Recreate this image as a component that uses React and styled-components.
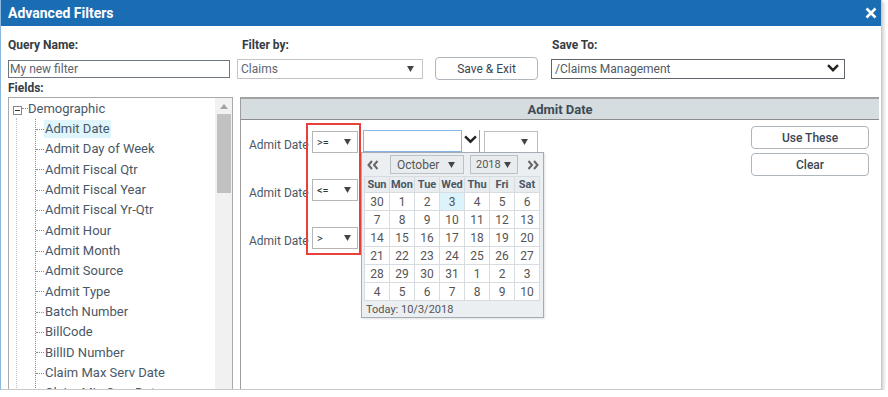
import React from 'react';
import styled, { createGlobalStyle } from 'styled-components';

const Global = createGlobalStyle`
  html, body { margin: 0; padding: 0; background: #fff; }
  body { font-family: Roboto, "Liberation Sans", Arial, sans-serif; }
  * { box-sizing: border-box; }
`;

const Window = styled.div`
  width: 882px;
  height: 390px;
  overflow: hidden;
  background: #fff;
  border-left: 1px solid #8db8df;
  border-right: 1px solid #c9c9c9;
  border-bottom: 1px solid #c9c9c9;
  box-shadow: 2px 2px 3px rgba(0, 0, 0, 0.18);
  display: flex;
  flex-direction: column;
`;

const TitleBar = styled.div`
  height: 26px;
  flex: none;
  background: #1b6db3;
  color: #fff;
  display: flex;
  align-items: center;
  justify-content: space-between;
  padding: 0 4px 0 7px;
  font-size: 14px;
  font-weight: 700;
`;

const CloseIcon = styled.svg`
  width: 12px;
  height: 12px;
`;

const FormRow = styled.div`
  display: flex;
  padding: 12px 0 0 7px;
`;

const Field = styled.div`
  display: flex;
  flex-direction: column;
  width: ${(p) => p.$w}px;
  margin-left: ${(p) => p.$ml || 0}px;
`;

const Label = styled.div`
  font-size: 12px;
  font-weight: 700;
  line-height: 14px;
  color: #363c42;
  padding-left: ${(p) => p.$pl || 0}px;
`;

const ControlRow = styled.div`
  display: flex;
  align-items: center;
  gap: 12px;
  height: 23px;
  margin-top: 5px;
`;

const TextInput = styled.div`
  width: 100%;
  height: 18px;
  border: 1px solid #6e7780;
  font-size: 12px;
  line-height: 16px;
  padding-left: 1px;
  color: #5a6570;
`;

const SelectBox = styled.div`
  width: ${(p) => p.$w}px;
  height: ${(p) => p.$h || 20}px;
  border: 1px solid ${(p) => p.$border || '#c4c4c4'};
  display: flex;
  align-items: center;
  justify-content: space-between;
  padding: 0 ${(p) => p.$pr || 6}px 0 ${(p) => p.$pl || 3}px;
  font-size: ${(p) => p.$fs || 12}px;
  color: ${(p) => p.$color || '#5d6770'};
  background: #fff;
  flex: none;
`;

const Caret = ({ size = 7 }) => (
  <svg width={size} height={size - 1} viewBox="0 0 8 7">
    <polygon points="0,0 8,0 4,7" fill="#444" />
  </svg>
);

const Chevron = ({ w = 12, sw = 2.2 }) => (
  <svg width={w} height={w * 0.7} viewBox="0 0 12 8">
    <polyline points="1,1 6,6 11,1" fill="none" stroke="#222" strokeWidth={sw} />
  </svg>
);

const Button = styled.div`
  width: ${(p) => p.$w}px;
  height: 23px;
  border: 1px solid #aeb5bb;
  border-radius: 4px;
  background: #fff;
  display: flex;
  align-items: center;
  justify-content: center;
  font-size: 12px;
  font-weight: ${(p) => p.$weight || 400};
  color: #3b4650;
  flex: none;
`;

const FieldsLabel = styled(Label)`
  padding-left: 7px;
  margin-top: 1px;
  margin-bottom: 2px;
`;

const Lower = styled.div`
  flex: 1;
  min-height: 0;
  display: flex;
  padding-left: 7px;
`;

const TreeBox = styled.div`
  width: 225px;
  flex: none;
  border: 1px solid #a9a9a9;
  border-bottom: none;
  display: flex;
`;

const TreeContent = styled.div`
  flex: 1;
  overflow: hidden;
  color: #4a5866;
  font-size: 13px;
`;

const Scrollbar = styled.div`
  width: 17px;
  background: #f1f1f1;
  display: flex;
  flex-direction: column;
  align-items: center;
`;

const ScrollArrow = styled.div`
  height: 16px;
  display: flex;
  align-items: center;
  justify-content: center;
`;

const ScrollThumb = styled.div`
  width: 14px;
  height: 79px;
  background: #c1c1c1;
`;

const RootRow = styled.div`
  height: 20px;
  display: flex;
  align-items: center;
  padding-left: 4px;
`;

const Toggle = styled.div`
  width: 9px;
  height: 9px;
  border: 1px solid #8a8a8a;
  position: relative;
  margin-top: 4px;
  &::after {
    content: '';
    position: absolute;
    left: 1px;
    right: 1px;
    top: 3px;
    height: 1px;
    background: #333;
  }
`;

const HLine = styled.span`
  width: ${(p) => p.$w}px;
  border-top: 1px dotted #8a8a8a;
  flex: none;
`;

const ChildList = styled.div`
  margin-left: 7px;
  padding-top: 1px;
  border-left: 1px dotted #c2c2c2;
`;

const ChildInner = styled.div`
  margin-left: 18px;
  border-left: 1px dotted #8a8a8a;
`;

const ChildItem = styled.div`
  height: 20.33px;
  display: flex;
  align-items: center;
  white-space: nowrap;
`;

const ItemText = styled.span`
  line-height: 18px;
  padding: 0 1px;
  background: ${(p) => (p.$selected ? '#dff5fc' : 'transparent')};
`;

const Panel = styled.div`
  flex: 1;
  margin-left: 7px;
  margin-right: 2px;
  border-left: 1px solid #9d9d9d;
  border-top: 2px solid #a2a2a2;
  display: flex;
  flex-direction: column;
`;

const PanelHeader = styled.div`
  height: 21px;
  flex: none;
  background: #d5dde1;
  border-bottom: 1px solid #8c8c8c;
  display: flex;
  align-items: center;
  justify-content: center;
  font-size: 13px;
  font-weight: 700;
  color: #3d4b56;
`;

const PanelBody = styled.div`
  flex: 1;
  display: flex;
`;

const Conditions = styled.div`
  display: flex;
  padding-top: 3px;
`;

const LabelColumn = styled.div`
  width: 57px;
  margin-left: 8px;
  padding-top: 8px;
  display: flex;
  flex-direction: column;
  gap: 26px;
`;

const CondLabel = styled.div`
  height: 22px;
  line-height: 29px;
  font-size: 12px;
  color: #4a5866;
  white-space: nowrap;
`;

const Highlight = styled.div`
  align-self: flex-start;
  border: 2px solid #e8413c;
  padding: 6px 1px 4px 4px;
  display: flex;
  flex-direction: column;
  gap: 26px;
`;

const ValueColumn = styled.div`
  position: relative;
  margin-left: 2px;
  padding-top: 7px;
`;

const ValueRow = styled.div`
  display: flex;
  align-items: flex-start;
  gap: 4px;
`;

const DateCombo = styled.div`
  display: flex;
  height: 22px;
`;

const DateInput = styled.div`
  width: 99px;
  height: 22px;
  border: 1px solid #86b6e6;
  background: #fff;
`;

const DropBtn = styled.div`
  width: 18px;
  height: 22px;
  display: flex;
  align-items: center;
  justify-content: center;
  border-right: 1px solid #9a9a9a;
  padding-bottom: 3px;
`;

const Calendar = styled.div`
  position: absolute;
  left: -2px;
  top: 29px;
  width: 183px;
  height: 166px;
  background: #eceff1;
  border: 1px solid #a4adb5;
  box-shadow: 1px 1px 2px rgba(0, 0, 0, 0.12);
  display: flex;
  flex-direction: column;
`;

const CalNav = styled.div`
  height: 23px;
  display: flex;
  align-items: center;
  padding-left: 5px;
`;

const NavArrow = styled.svg`
  width: 12px;
  height: 10px;
  flex: none;
  margin-left: ${(p) => p.$ml || 0}px;
`;

const NavSelect = styled(SelectBox)`
  margin-left: ${(p) => p.$ml || 0}px;
  background: #e9ecef;
  border-color: #b9c0c6;
  color: #555;
`;

const CalTable = styled.table`
  margin: 0 2px;
  width: 176px;
  border-collapse: collapse;
  table-layout: fixed;
  font-size: 12px;
  color: #555;
`;

const HeadCell = styled.th`
  height: 16px;
  padding: 0;
  border: 1px solid #d6dce0;
  background: #e9edf0;
  font-size: 11px;
  font-weight: 700;
  color: #4a5866;
  text-align: center;
  white-space: nowrap;
  overflow: hidden;
`;

const DayCell = styled.td`
  height: 18px;
  padding: 0;
  border: 1px solid #d6dce0;
  background: ${(p) => (p.$today ? '#dcf3fb' : '#fff')};
  text-align: center;
`;

const CalFooter = styled.div`
  height: 16px;
  line-height: 17px;
  font-size: 11px;
  color: #555;
  padding-left: 4px;
`;

const ButtonColumn = styled.div`
  margin-left: auto;
  margin-right: 10px;
  padding-top: 6px;
  display: flex;
  flex-direction: column;
  gap: 4px;
`;

const fields = [
  'Admit Date',
  'Admit Day of Week',
  'Admit Fiscal Qtr',
  'Admit Fiscal Year',
  'Admit Fiscal Yr-Qtr',
  'Admit Hour',
  'Admit Month',
  'Admit Source',
  'Admit Type',
  'Batch Number',
  'BillCode',
  'BillID Number',
  'Claim Max Serv Date',
  'Claim Min Serv Date',
];

const weeks = [
  [30, 1, 2, 3, 4, 5, 6],
  [7, 8, 9, 10, 11, 12, 13],
  [14, 15, 16, 17, 18, 19, 20],
  [21, 22, 23, 24, 25, 26, 27],
  [28, 29, 30, 31, 1, 2, 3],
  [4, 5, 6, 7, 8, 9, 10],
];

const ops = ['>=', '<=', '>'];

export default function App() {
  return (
    <>
      <Global />
      <Window>
        <TitleBar>
          <span>Advanced Filters</span>
          <CloseIcon viewBox="0 0 12 12">
            <path d="M1.5 1.5 L10.5 10.5 M10.5 1.5 L1.5 10.5" stroke="#fff" strokeWidth="2.6" />
          </CloseIcon>
        </TitleBar>

        <FormRow>
          <Field $w={222}>
            <Label>Query Name:</Label>
            <ControlRow>
              <TextInput>My new filter</TextInput>
            </ControlRow>
          </Field>
          <Field $w={301} $ml={7}>
            <Label $pl={5}>Filter by:</Label>
            <ControlRow>
              <SelectBox $w={186} $pr={8}>
                <span>Claims</span>
                <Caret />
              </SelectBox>
              <Button $w={103}>Save &amp; Exit</Button>
            </ControlRow>
          </Field>
          <Field $w={294} $ml={13}>
            <Label $pl={1}>Save To:</Label>
            <ControlRow>
              <SelectBox $w={294} $border="#5e646a" $pr={5} $color="#4f5a64">
                <span>/Claims Management</span>
                <Chevron w={12} sw={2.4} />
              </SelectBox>
            </ControlRow>
          </Field>
        </FormRow>

        <FieldsLabel>Fields:</FieldsLabel>

        <Lower>
          <TreeBox>
            <TreeContent>
              <RootRow>
                <Toggle />
                <HLine $w={6} />
                <span>Demographic</span>
              </RootRow>
              <ChildList>
                <ChildInner>
                  {fields.map((f, i) => (
                    <ChildItem key={f}>
                      <HLine $w={8} />
                      <ItemText $selected={i === 0}>{f}</ItemText>
                    </ChildItem>
                  ))}
                </ChildInner>
              </ChildList>
            </TreeContent>
            <Scrollbar>
              <ScrollArrow>
                <svg width="8" height="5" viewBox="0 0 8 5">
                  <polygon points="0,5 8,5 4,0" fill="#a3a3a3" />
                </svg>
              </ScrollArrow>
              <ScrollThumb />
            </Scrollbar>
          </TreeBox>

          <Panel>
            <PanelHeader>Admit Date</PanelHeader>
            <PanelBody>
              <Conditions>
                <LabelColumn>
                  {ops.map((o) => (
                    <CondLabel key={o}>Admit Date</CondLabel>
                  ))}
                </LabelColumn>
                <Highlight>
                  {ops.map((o) => (
                    <SelectBox key={o} $w={46} $h={22} $pl={4} $pr={6} $fs={11} $color="#333" $border="#b6b6b6">
                      <span>{o}</span>
                      <Caret />
                    </SelectBox>
                  ))}
                </Highlight>
                <ValueColumn>
                  <ValueRow>
                    <DateCombo>
                      <DateInput />
                      <DropBtn>
                        <Chevron w={13} sw={2.2} />
                      </DropBtn>
                    </DateCombo>
                    <SelectBox $w={54} $h={22} $pr={9} $border="#bdbdbd" style={{ marginTop: 1 }}>
                      <span />
                      <Caret />
                    </SelectBox>
                  </ValueRow>
                  <Calendar>
                    <CalNav>
                      <NavArrow viewBox="0 0 12 10">
                        <path d="M5 1 L1.5 5 L5 9 M10.5 1 L7 5 L10.5 9" fill="none" stroke="#666" strokeWidth="2" />
                      </NavArrow>
                      <NavSelect $w={74} $h={19} $ml={11} $pl={6} $pr={8}>
                        <span>October</span>
                        <Caret />
                      </NavSelect>
                      <NavSelect $w={48} $h={19} $ml={6} $pl={5} $pr={6} $fs={11}>
                        <span>2018</span>
                        <Caret />
                      </NavSelect>
                      <NavArrow viewBox="0 0 12 10" $ml={9}>
                        <path d="M1.5 1 L5 5 L1.5 9 M7 1 L10.5 5 L7 9" fill="none" stroke="#666" strokeWidth="2" />
                      </NavArrow>
                    </CalNav>
                    <CalTable>
                      <thead>
                        <tr>
                          {['Sun', 'Mon', 'Tue', 'Wed', 'Thu', 'Fri', 'Sat'].map((d) => (
                            <HeadCell key={d}>{d}</HeadCell>
                          ))}
                        </tr>
                      </thead>
                      <tbody>
                        {weeks.map((w, wi) => (
                          <tr key={wi}>
                            {w.map((d, di) => (
                              <DayCell key={di} $today={wi === 0 && d === 3}>
                                {d}
                              </DayCell>
                            ))}
                          </tr>
                        ))}
                      </tbody>
                    </CalTable>
                    <CalFooter>Today: 10/3/2018</CalFooter>
                  </Calendar>
                </ValueColumn>
              </Conditions>
              <ButtonColumn>
                <Button $w={118} $weight={500}>Use These</Button>
                <Button $w={118} $weight={500}>Clear</Button>
              </ButtonColumn>
            </PanelBody>
          </Panel>
        </Lower>
      </Window>
    </>
  );
}
